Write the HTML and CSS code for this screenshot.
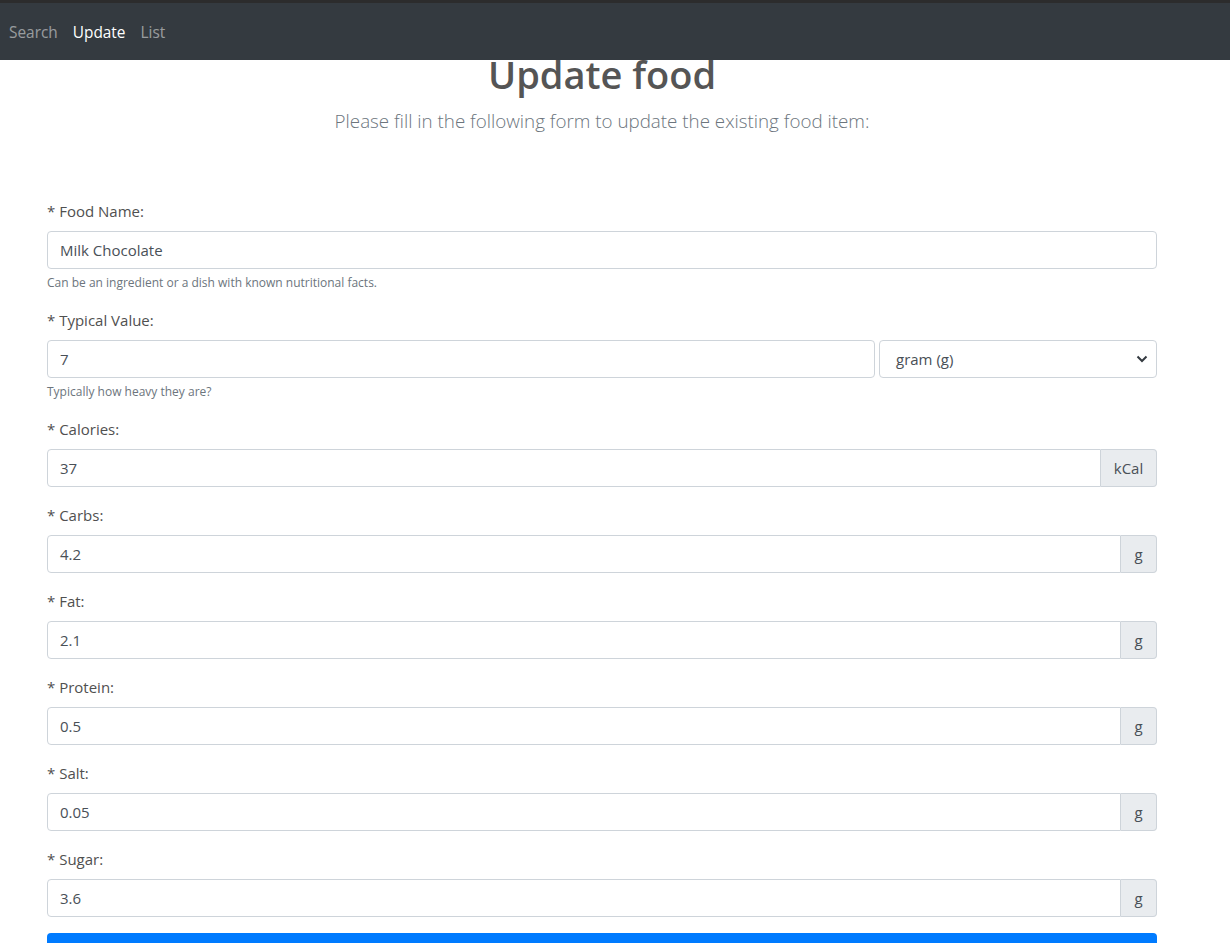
FILE: index.html
```html
<!DOCTYPE html>
<html lang="en">
<head>
<meta charset="utf-8">
<title>Update food</title>
<link rel="stylesheet" href="styles.css">
</head>
<body>
<nav class="navbar">
  <a class="nav-link" href="#">Search</a>
  <a class="nav-link active" href="#">Update</a>
  <a class="nav-link" href="#">List</a>
</nav>
<main class="page">
  <h1 class="title">Update food</h1>
  <p class="lead">Please fill in the following form to update the existing food item:</p>
  <form class="form">
    <div class="group">
      <label class="label">* Food Name:</label>
      <div class="control">Milk Chocolate</div>
      <small class="help">Can be an ingredient or a dish with known nutritional facts.</small>
    </div>
    <div class="group">
      <label class="label">* Typical Value:</label>
      <div class="split">
        <div class="control grow">7</div>
        <div class="control select">
          <span>gram (g)</span>
          <svg class="chev" width="12" height="8" viewBox="0 0 12 8"><path d="M1.5 1.5 L6 6 L10.5 1.5" fill="none" stroke="#343a40" stroke-width="2"/></svg>
        </div>
      </div>
      <small class="help">Typically how heavy they are?</small>
    </div>
    <div class="group">
      <label class="label">* Calories:</label>
      <div class="igroup"><div class="control grow joined">37</div><div class="addon kcal">kCal</div></div>
    </div>
    <div class="group">
      <label class="label">* Carbs:</label>
      <div class="igroup"><div class="control grow joined">4.2</div><div class="addon">g</div></div>
    </div>
    <div class="group">
      <label class="label">* Fat:</label>
      <div class="igroup"><div class="control grow joined">2.1</div><div class="addon">g</div></div>
    </div>
    <div class="group">
      <label class="label">* Protein:</label>
      <div class="igroup"><div class="control grow joined">0.5</div><div class="addon">g</div></div>
    </div>
    <div class="group">
      <label class="label">* Salt:</label>
      <div class="igroup"><div class="control grow joined">0.05</div><div class="addon">g</div></div>
    </div>
    <div class="group">
      <label class="label">* Sugar:</label>
      <div class="igroup"><div class="control grow joined">3.6</div><div class="addon">g</div></div>
    </div>
    <button class="btn" type="button">Update</button>
  </form>
</main>
</body>
</html>
```
FILE: styles.css
```css
* { box-sizing: border-box; }
html, body { margin: 0; padding: 0; }
body {
  font-family: "Open Sans", "Noto Sans", sans-serif;
  font-size: 16px;
  line-height: 1.5;
  color: #212529;
  background: #fff;
}
.navbar {
  position: fixed;
  top: 0; left: 0; right: 0;
  height: 60px;
  background: #343a40;
  border-top: 3px solid #2c2c2d;
  display: flex;
  align-items: center;
  padding-left: 9px;
  padding-top: 2px;
  gap: 15px;
  z-index: 10;
}
.nav-link {
  color: rgba(255,255,255,.5);
  text-decoration: none;
  font-size: 15.4px;
}
.nav-link.active { color: #fff; }
.page {
  padding: 50px 0 40px 47px;
  width: 1157px;
}
.title {
  margin: 0 0 8px;
  font-size: 38px;
  font-weight: 600;
  line-height: 48px;
  text-align: center;
  color: #555;
}
.lead {
  margin: 0;
  font-size: 18.8px;
  font-weight: 300;
  line-height: 30px;
  text-align: center;
  color: #6c757d;
}
.form { padding-top: 63px; }
.group { margin-bottom: 16px; }
.label {
  display: block;
  margin-bottom: 8px;
  font-size: 15px;
  line-height: 24px;
  color: #505050;
}
.control {
  height: 38px;
  padding: 0 12px;
  border: 1px solid #ced4da;
  border-radius: 4px;
  display: flex;
  align-items: center;
  font-size: 15px;
  color: #495057;
  background: #fff;
}
.help {
  display: block;
  margin-top: 4px;
  font-size: 12px;
  line-height: 19px;
  color: #6c757d;
}
.split { display: flex; gap: 4px; }
.grow { flex: 1; }
.select {
  width: 278px;
  padding-left: 16px;
  padding-right: 8px;
  justify-content: space-between;
}
.chev { display: block; }
.igroup { display: flex; }
.joined { border-top-right-radius: 0; border-bottom-right-radius: 0; }
.addon {
  height: 38px;
  width: 36px;
  display: flex;
  align-items: center;
  justify-content: center;
  background: #e9ecef;
  border: 1px solid #ced4da;
  border-left: 0;
  border-radius: 0 4px 4px 0;
  font-size: 15px;
  color: #495057;
}
.addon.kcal { width: 56px; }
.btn {
  display: block;
  width: 100%;
  height: 38px;
  padding: 12px 0 0;
  border: 0;
  border-radius: 4px;
  background: #007bff;
  color: #fff;
  font-family: inherit;
  font-size: 16px;
  line-height: 24px;
}
```
